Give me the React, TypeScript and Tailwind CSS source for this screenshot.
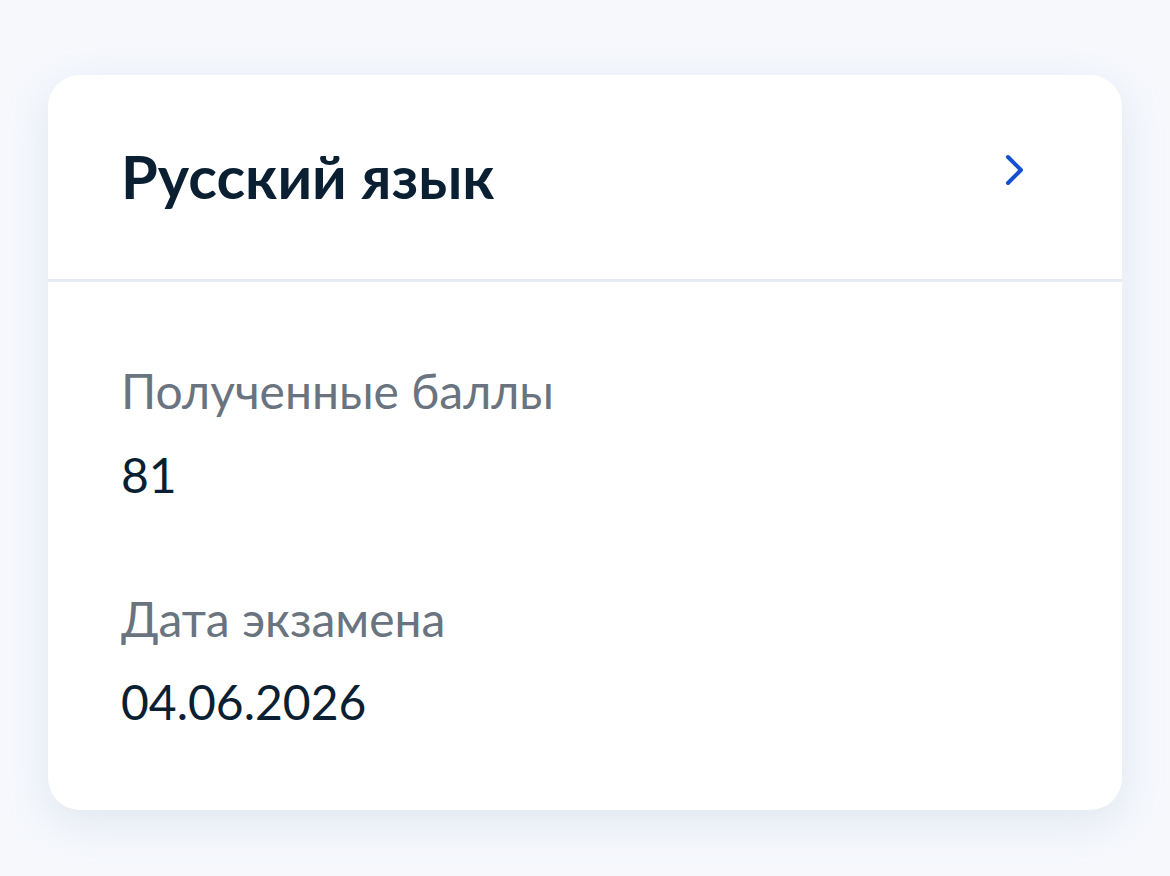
export default function App() {
  return (
    <div
      className="min-h-[876px] w-full bg-[#f6f8fc] pt-[75px] px-[48px]"
      style={{ fontFamily: "Lato, 'Noto Sans', sans-serif" }}
    >
      <div className="w-[1074px] h-[735px] rounded-[32px] bg-white shadow-[0_12px_40px_rgba(170,185,215,0.28)] overflow-hidden">
        <div className="flex items-center justify-between h-[207px] pl-[73px] pr-[96px] border-b-[3px] border-[#e6ebf3]">
          <h1 className="text-[59.5px] leading-none font-bold text-[#0b1f33]">Русский язык</h1>
          <svg width="22" height="32" viewBox="0 0 22 32" fill="none" className="-mt-[14px]">
            <path d="M4 3l13 13L4 29" stroke="#1451d0" strokeWidth="4" strokeLinecap="round" strokeLinejoin="round" />
          </svg>
        </div>
        <div className="pl-[73px] pt-[85px] flex flex-col">
          <div className="text-[48px] leading-none text-[#6a7480]">Полученные баллы</div>
          <div className="mt-[36px] text-[48px] leading-none text-[#0b1f33]">81</div>
          <div className="mt-[96px] text-[48px] leading-none text-[#6a7480]">Дата экзамена</div>
          <div className="mt-[35px] text-[48px] leading-none text-[#0b1f33]">04.06.2026</div>
        </div>
      </div>
    </div>
  );
}
